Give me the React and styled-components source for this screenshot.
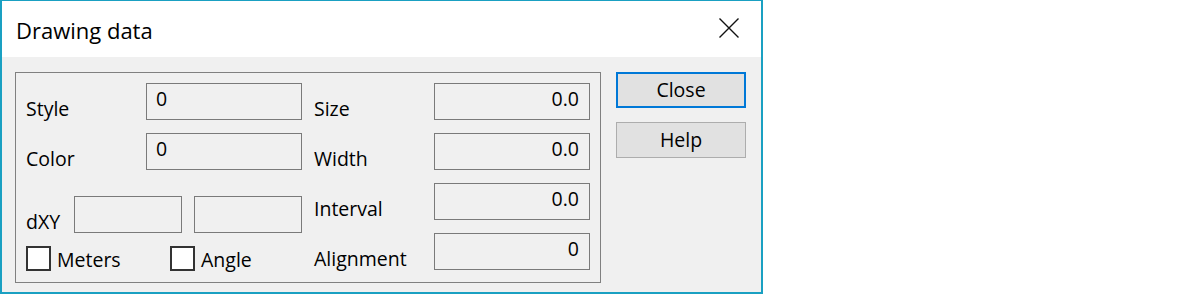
import React from 'react'
import styled, { createGlobalStyle } from 'styled-components'

const GlobalStyle = createGlobalStyle`
  html, body {
    margin: 0;
    padding: 0;
    background: #fff;
  }
  body {
    font-family: "Open Sans", "Noto Sans", sans-serif;
    color: #000;
  }
`

export default function App() {
  return (
    <>
      <GlobalStyle />
      <Window>
        <TitleBar>
          <Title>Drawing data</Title>
          <CloseX aria-label="Close">
            <svg width="20" height="20" viewBox="0 0 20 20">
              <path d="M0.5 0.5 L19.5 19.5 M19.5 0.5 L0.5 19.5" stroke="#111" strokeWidth="1.4" fill="none" />
            </svg>
          </CloseX>
        </TitleBar>

        <Body>
          <GroupBox>
            <Column>
              <Row>
                <Label $width={120}>Style</Label>
                <Field $width={156}>0</Field>
              </Row>
              <Row>
                <Label $width={120}>Color</Label>
                <Field $width={156}>0</Field>
              </Row>
              <Row $top={26}>
                <Label $width={48}>dXY</Label>
                <Field $width={108} />
                <Field $width={108} $gap={12} />
              </Row>
              <CheckRow>
                <CheckItem $width={144}>
                  <Box />
                  <CheckText>Meters</CheckText>
                </CheckItem>
                <CheckItem>
                  <Box />
                  <CheckText>Angle</CheckText>
                </CheckItem>
              </CheckRow>
            </Column>

            <Column $gap={12}>
              <Row>
                <Label $width={120}>Size</Label>
                <Field $width={156} $right>0.0</Field>
              </Row>
              <Row>
                <Label $width={120}>Width</Label>
                <Field $width={156} $right>0.0</Field>
              </Row>
              <Row>
                <Label $width={120}>Interval</Label>
                <Field $width={156} $right>0.0</Field>
              </Row>
              <Row>
                <Label $width={120}>Alignment</Label>
                <Field $width={156} $right>0</Field>
              </Row>
            </Column>
          </GroupBox>

          <Buttons>
            <Button $default>Close</Button>
            <Button>Help</Button>
          </Buttons>
        </Body>
      </Window>
    </>
  )
}

const Window = styled.div`
  width: 763px;
  height: 294px;
  box-sizing: border-box;
  border: 2px solid #1aa0c2;
  border-top-width: 1px;
  background: #f0f0f0;
  display: flex;
  flex-direction: column;
`

const TitleBar = styled.div`
  height: 56px;
  flex: none;
  background: #fff;
  display: flex;
  align-items: center;
  justify-content: space-between;
  padding: 2px 22px 0 14px;
  box-sizing: border-box;
`

const Title = styled.div`
  font-size: 22px;
  line-height: 30px;
`

const CloseX = styled.div`
  width: 20px;
  height: 20px;
  margin-top: -5px;
  display: flex;
`

const Body = styled.div`
  display: flex;
  align-items: flex-start;
  padding: 15px 16px 0 13px;
`

const GroupBox = styled.div`
  width: 586px;
  box-sizing: border-box;
  border: 1px solid #808080;
  padding: 10px 10px 11px 10px;
  display: flex;
  align-items: flex-start;
`

const Column = styled.div`
  display: flex;
  flex-direction: column;
  gap: 13px;
  margin-left: ${p => p.$gap || 0}px;
`

const Row = styled.div`
  display: flex;
  align-items: flex-start;
  height: 37px;
  margin-top: ${p => (p.$top ? p.$top - 13 : 0)}px;
`

const Label = styled.div`
  width: ${p => p.$width}px;
  flex: none;
  font-size: 19.5px;
  line-height: 26px;
  margin-top: 13px;
  white-space: nowrap;
`

const Field = styled.div`
  width: ${p => p.$width}px;
  height: 37px;
  flex: none;
  box-sizing: border-box;
  border: 1px solid #7a7a7a;
  background: #f0f0f0;
  margin-left: ${p => p.$gap || 0}px;
  padding: 2px 10px 0 9px;
  font-size: 19.5px;
  line-height: 26px;
  text-align: ${p => (p.$right ? 'right' : 'left')};
`

const CheckRow = styled.div`
  display: flex;
  align-items: center;
  height: 25px;
`

const CheckItem = styled.label`
  display: flex;
  align-items: center;
  gap: 6px;
  width: ${p => (p.$width ? `${p.$width}px` : 'auto')};
`

const Box = styled.span`
  width: 25px;
  height: 25px;
  box-sizing: border-box;
  border: 2px solid #333;
  background: #fff;
  flex: none;
`

const CheckText = styled.span`
  font-size: 19.5px;
  line-height: 26px;
  margin-top: 2px;
`

const Buttons = styled.div`
  display: flex;
  flex-direction: column;
  gap: 14px;
  margin-left: 15px;
`

const Button = styled.div`
  width: 130px;
  height: 36px;
  box-sizing: border-box;
  background: #e1e1e1;
  border: ${p => (p.$default ? '2px solid #0078d7' : '1px solid #adadad')};
  display: flex;
  align-items: center;
  justify-content: center;
  font-size: 19.5px;
  line-height: 26px;
`
